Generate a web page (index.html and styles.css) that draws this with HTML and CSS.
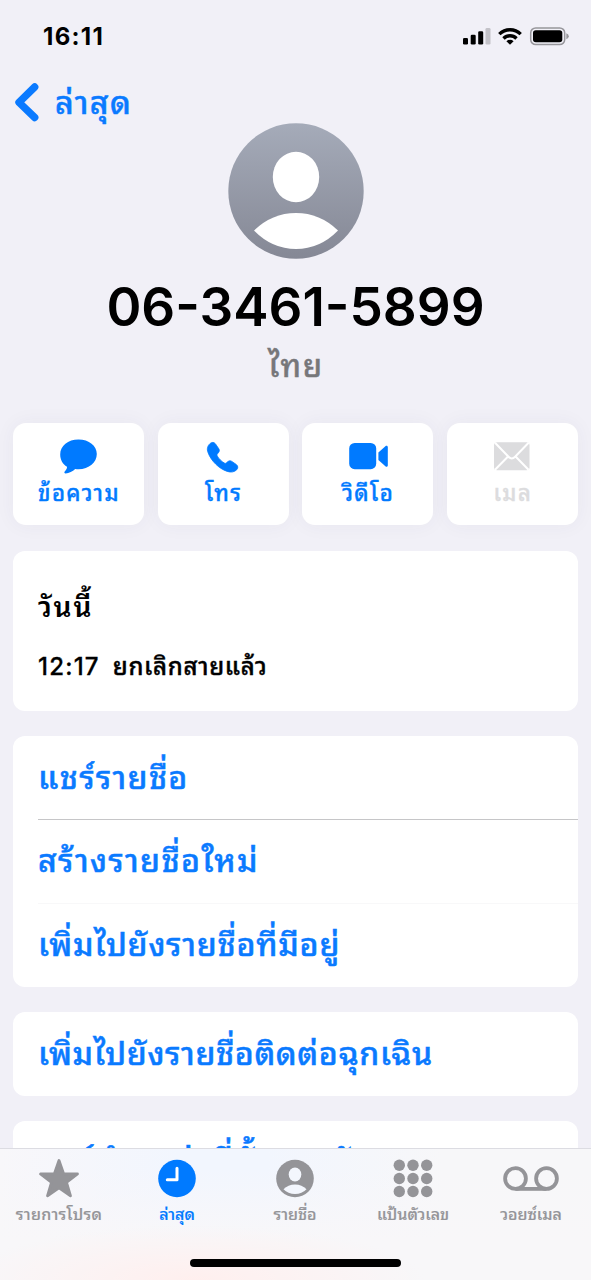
FILE: index.html
```html
<!DOCTYPE html>
<html lang="th">
<head>
<meta charset="utf-8">
<meta name="viewport" content="width=device-width, initial-scale=1">
<title>ล่าสุด</title>
<link rel="stylesheet" href="styles.css">
</head>
<body>
<div class="screen">
  <header class="status-bar">
    <span class="clock">16:11</span>
    <svg class="status-icons" width="106" height="20" viewBox="0 0 106 20">
      <rect x="0" y="12" width="5" height="6.500" rx="1.300"/>
      <rect x="7.700" y="8.800" width="5" height="9.700" rx="1.300"/>
      <rect x="15.200" y="5.300" width="5" height="13.200" rx="1.300"/>
      <rect x="22.500" y="2" width="5" height="16.500" rx="1.300" fill="#c3c2c8"/>
      <g fill="none" stroke="#000" stroke-width="3.400">
        <path d="M36.300 8.100a15.400 15.400 0 0 1 21.400 0"/>
        <path d="M40.500 12.500a9.200 9.200 0 0 1 13 0"/>
      </g>
      <path d="M43.400 15.200a5.200 5.200 0 0 1 7.200 0L47 18.800z"/>
      <rect x="67.700" y="1.900" width="34" height="16.700" rx="5" fill="none" stroke="#97969b" stroke-width="1.500"/>
      <rect x="70" y="4.200" width="29.300" height="12.100" rx="2.800"/>
      <path d="M103.300 7.200q2.500 1 2.500 3t-2.500 3z" fill="#97969b"/>
    </svg>
  </header>

  <nav class="nav-bar">
    <svg class="chevron" width="26" height="40" viewBox="0 0 26 40"><path d="M20.700 4L5 19.300 20.700 34.500" fill="none" stroke="#0a7aff" stroke-width="7.400" stroke-linecap="round" stroke-linejoin="round"/></svg>
    <span class="back-label">ล่าสุด</span>
  </nav>

  <section class="profile">
    <svg class="avatar" width="136" height="136" viewBox="0 0 136 136">
      <defs><linearGradient id="avatar-fill" x1="0" y1="0" x2="0" y2="1"><stop offset="0" stop-color="#a5abb9"/><stop offset="1" stop-color="#858895"/></linearGradient></defs>
      <circle cx="68" cy="68" r="67.700" fill="url(#avatar-fill)"/>
      <ellipse cx="68" cy="54" rx="23.200" ry="25.300" fill="#fff"/>
      <path d="M26 107.500Q44 90 68 90t42 17.500Q92 126 68 126T26 107.500z" fill="#fff"/>
    </svg>
    <h1 class="number">06-3461-5899</h1>
    <p class="country">ไทย</p>
  </section>

  <section class="actions">
    <div class="action">
      <svg width="40" height="40" viewBox="0 0 40 40"><path d="M19.500 3.500C30 3.500 37.800 9.700 37.800 18S30 33.200 19.500 33.200c-1 0-2.300-.1-3.300-.3-2.500 2.400-6.300 4.200-9.500 4.500-1.400 0-1.700-1.200-1-2 1.600-1.500 2.500-3 2.300-4.600C3.800 28.100 1.200 23.600 1.200 18.400 1.200 9.800 9 3.500 19.500 3.500z"/></svg>
      <span class="label label-message">ข้อความ</span>
    </div>
    <div class="action">
      <svg width="40" height="40" viewBox="0 0 40 40"><path stroke="currentColor" stroke-width=".8" d="M7.200 7.400c1.600-1.500 4.100-1.300 5.300.5l3.300 4.900c.9 1.400.6 2.800-.4 3.900l-1.200 1.400c-.4.600-.4 1.100 0 1.800 1.700 3 4.300 5.500 7.200 7.200.7.400 1.200.4 1.800-.1l1.700-1.400c1.200-1 2.600-1.100 3.900-.2l4.500 3.100c1.800 1.300 2 3.700.4 5.300-2.500 2.400-5.800 2.800-9.500 1.600C15.900 32.600 8.200 25.100 5 16.500c-1.300-3.500-.7-6.500 2.200-9.100z"/></svg>
      <span class="label label-call">โทร</span>
    </div>
    <div class="action">
      <svg width="40" height="40" viewBox="0 0 40 40"><rect x="1.200" y="7" width="27" height="26.200" rx="5.500"/><path d="M30.400 16.500l7-6.300c1.200-1 2.400-.4 2.400 1v18c0 1.500-1.200 2-2.400 1l-7-6.300z"/></svg>
      <span class="label label-video">วิดีโอ</span>
    </div>
    <div class="action disabled">
      <svg width="40" height="40" viewBox="0 0 40 40"><rect x="2" y="6.300" width="35.500" height="28" rx="3"/><path d="M3 6.800l13.500 14q3.300 3.300 6.600 0l13.500-14M3 33.700l12.800-13M36.500 33.700L23.800 20.700" fill="none" stroke="#fff" stroke-width="2"/></svg>
      <span class="label label-mail">เมล</span>
    </div>
  </section>

  <section class="card history">
    <h2 class="day">วันนี้</h2>
    <p class="call"><span class="call-time">12:17</span><span class="call-state">ยกเลิกสายแล้ว</span></p>
  </section>

  <section class="card list">
    <div class="row"><span class="share">แชร์รายชื่อ</span></div>
    <div class="row ruled"><span class="create">สร้างรายชื่อใหม่</span></div>
    <div class="row faint"><span class="existing">เพิ่มไปยังรายชื่อที่มีอยู่</span></div>
  </section>

  <section class="card list">
    <div class="row"><span class="emergency">เพิ่มไปยังรายชื่อติดต่อฉุกเฉิน</span></div>
  </section>

  <section class="card list">
    <div class="row last"><span class="location">แชร์ตำแหน่งที่ตั้งของฉัน</span></div>
  </section>

  <footer class="tab-bar">
    <div class="tab">
      <svg width="56" height="44" viewBox="0 0 56 44"><path d="M28 4.500l4.600 13.200 13.900.3-11 8.500 4 13.300L28 31.900l-11.500 7.900 4-13.300-11-8.500 13.900-.3z" stroke="currentColor" stroke-width="2.800" stroke-linejoin="round"/></svg>
      <span class="tab-label favorites">รายการโปรด</span>
    </div>
    <div class="tab active">
      <svg width="56" height="44" viewBox="0 0 56 44"><circle cx="28" cy="22.500" r="18.800"/><path d="M28 12.200v11.500H18.300" fill="none" stroke="#fff" stroke-width="3" stroke-linecap="round" stroke-linejoin="round"/></svg>
      <span class="tab-label recents">ล่าสุด</span>
    </div>
    <div class="tab">
      <svg width="56" height="44" viewBox="0 0 56 44"><circle cx="28" cy="22.500" r="18.800"/><ellipse cx="28" cy="18.500" rx="6.300" ry="7" fill="#f3f6fd"/><path d="M16.500 33.200Q21 28.500 28 28.500t11.500 4.700Q35 38 28 38t-11.500-4.800z" fill="#f3f6fd"/></svg>
      <span class="tab-label contacts">รายชื่อ</span>
    </div>
    <div class="tab">
      <svg width="56" height="44" viewBox="0 0 56 44"><g><circle cx="14.300" cy="9.300" r="5.700"/><circle cx="28" cy="9.300" r="5.700"/><circle cx="41.700" cy="9.300" r="5.700"/><circle cx="14.300" cy="22.500" r="5.700"/><circle cx="28" cy="22.500" r="5.700"/><circle cx="41.700" cy="22.500" r="5.700"/><circle cx="14.300" cy="35.500" r="5.700"/><circle cx="28" cy="35.500" r="5.700"/><circle cx="41.700" cy="35.500" r="5.700"/></g></svg>
      <span class="tab-label keypad">แป้นตัวเลข</span>
    </div>
    <div class="tab">
      <svg width="56" height="44" viewBox="0 0 56 44"><g fill="none" stroke="currentColor" stroke-width="3.800"><circle cx="12.500" cy="22.500" r="10.400"/><circle cx="43.500" cy="22.500" r="10.400"/><path d="M12.500 32.900h31"/></g></svg>
      <span class="tab-label voicemail">วอยซ์เมล</span>
    </div>
    <div class="home-indicator"></div>
  </footer>
</div>
</body>
</html>
```
FILE: styles.css
```css
* { box-sizing: border-box; }
body { margin: 0; background: #f1f0f7; font-family: Inter, "Noto Sans Thai Looped", "Noto Sans Thai", "Noto Sans", sans-serif; color: #000; }
h1, h2, p { margin: 0; }
svg { display: block; fill: currentColor; flex: none; }
.screen { width: 591px; height: 1280px; overflow: hidden; position: relative; display: flex; flex-direction: column; }
.screen > * { flex-shrink: 0; }
span { white-space: nowrap; }

.status-bar { height: 74px; padding: 26px 22px 0 43px; display: flex; justify-content: space-between; align-items: flex-start; }
.clock { font-size: 24px; line-height: 22px; font-weight: 700; letter-spacing: 1.300px; }

.nav-bar { height: 49px; padding: 9px 0 0 14px; display: flex; align-items: flex-start; color: #0a7aff; }
.back-label { margin-left: 15px; font-size: 32px; line-height: 39px; font-weight: 500; letter-spacing: 1.500px; -webkit-text-stroke: .5px; }

.profile { height: 300px; display: flex; flex-direction: column; align-items: center; }
.number { margin-top: 18px; font-size: 53px; line-height: 60px; font-weight: 600; white-space: nowrap; }
.country { margin-top: 9px; padding-left: 1px; font-size: 31px; line-height: 40px; font-weight: 500; letter-spacing: 1.700px; color: #77777a; -webkit-text-stroke: .4px; }

.actions { display: grid; grid-template-columns: repeat(4, 131px); gap: 13.600px; padding-left: 13px; }
.action { height: 102px; border-radius: 13px; background: #fff; box-shadow: 0 0 20px rgba(60, 50, 100, .05); display: flex; flex-direction: column; align-items: center; padding-top: 13px; color: #007aff; }
.label { padding-left: 1px; font-size: 22px; line-height: 34px; font-weight: 500; letter-spacing: 1.400px; -webkit-text-stroke: .4px; }
.disabled { color: #dcdcde; }

.card { width: 565px; margin: 26px 0 0 13px; border-radius: 12px; background: #fff; }
.history { height: 160px; padding: 36px 25px 0; }
.day { font-size: 28px; line-height: 40px; font-weight: 600; letter-spacing: 1.800px; }
.call { display: flex; gap: 13px; margin-top: 20px; line-height: 40px; font-size: 24px; font-weight: 500; }
.call-time { letter-spacing: 1.200px; -webkit-text-stroke: .3px; }
.call-state { letter-spacing: .700px; -webkit-text-stroke: .4px; }
.list { margin-top: 25.500px; padding-left: 25px; color: #0a7aff; }
.history + .list { margin-top: 25px; }
.row { height: 83.500px; font-size: 32px; line-height: 84px; font-weight: 500; -webkit-text-stroke: .5px; }
.ruled { border-top: 1px solid #c6c6c8; margin-top: -.500px; line-height: 81px; }
.faint { border-top: 1px solid #f8f8f9; line-height: 82px; height: 84px; }
.last { line-height: 80px; }
.share { letter-spacing: 1.350px; }
.create { letter-spacing: 1.400px; }
.existing { letter-spacing: .800px; }
.emergency { letter-spacing: .650px; }
.location { letter-spacing: 1px; }

.tab-bar { position: absolute; left: 0; bottom: 0; width: 591px; height: 132px; border-top: 1px solid #dcdce2; background: linear-gradient(90deg, #f8f7fa, #f2f6fe 30%, #f2f6fe 45%, #f7f7f9 75%); display: grid; grid-template-columns: repeat(5, 118px); padding-top: 7px; color: #949498; }
.tab-bar::before { content: ""; position: absolute; inset: 0; background: radial-gradient(ellipse 230px 55px at 195px 100%, #ffefee, rgba(255, 239, 238, 0)), linear-gradient(180deg, rgba(249, 248, 250, 0) 15%, #f8f7f9 70%); }
.tab { position: relative; display: flex; flex-direction: column; align-items: center; }
.active { color: #007aff; }
.tab-label { font-size: 16px; line-height: 28px; font-weight: 500; -webkit-text-stroke: .2px; }
.favorites { letter-spacing: .350px; }
.home-indicator { position: absolute; left: 190px; bottom: 13px; width: 211px; height: 8px; border-radius: 4px; background: #000; }
```
